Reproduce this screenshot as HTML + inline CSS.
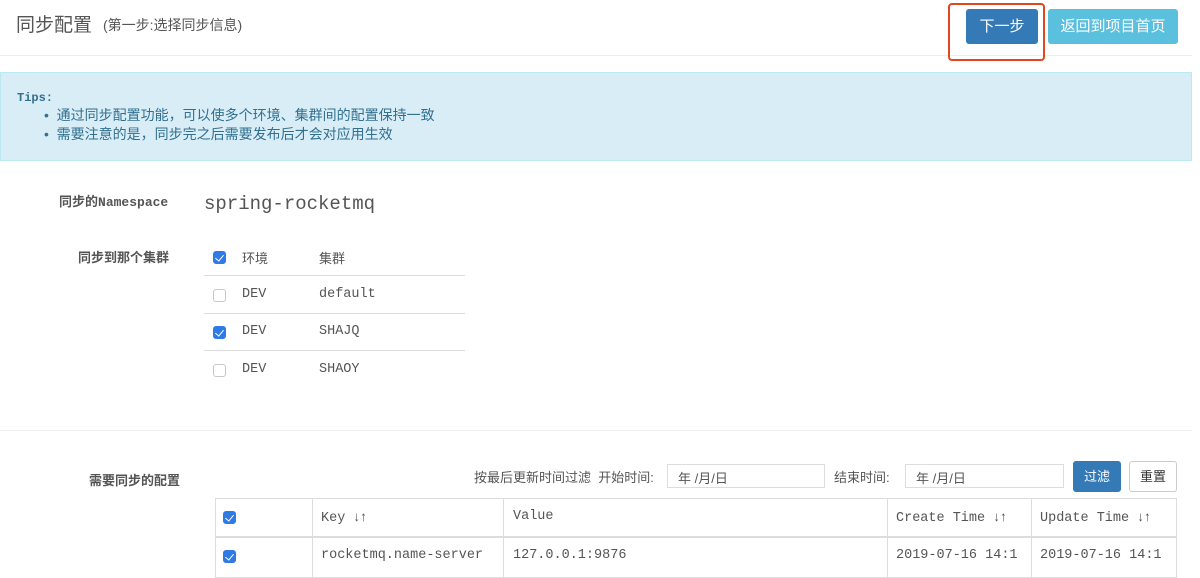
<!DOCTYPE html>
<html><head><meta charset="utf-8"><style>
*{margin:0;padding:0;box-sizing:border-box}
body{width:1200px;height:567px;overflow:hidden;background:#fff;font-family:"Liberation Sans","Noto Sans CJK SC",sans-serif;color:#333;position:relative;font-size:13px}
.a{position:absolute;white-space:nowrap}
.mono{font-family:"Liberation Mono","Noto Sans CJK SC",monospace;font-size:13.5px}
.cb{position:absolute;width:13px;height:13px;border-radius:3px;border:1px solid #c8c8c8;background:#fff}
.cb.on{background:#2f7ae5;border-color:#2f7ae5}
.cb.on:after{content:"";position:absolute;left:3px;top:1px;width:4px;height:7px;border:solid #fff;border-width:0 1.5px 1.5px 0;transform:rotate(40deg)}
.hl{position:absolute;height:1px;background:#ddd}
.vl{position:absolute;width:1px;background:#ddd}
</style></head><body>
<div class="a" style="left:16px;top:10px;font-size:19px;color:#555">同步配置</div>
<div class="a" style="left:103px;top:15px;font-size:14px;color:#555">(第一步:选择同步信息)</div>
<div class="hl" style="left:0;top:55px;width:1192px;background:#eee"></div>
<div style="position:absolute;left:948px;top:3px;width:97px;height:58px;border:2px solid #e4471d;border-radius:4px"></div>
<div class="a" style="left:966px;top:9px;width:72px;height:35px;background:#337ab7;border-radius:3px;color:#fff;font-size:15px;text-align:center;line-height:35px">下一步</div>
<div class="a" style="left:1048px;top:9px;width:130px;height:35px;background:#5bc0de;border-radius:3px;color:#fff;font-size:15px;text-align:center;line-height:35px">返回到项目首页</div>
<div style="position:absolute;left:0;top:72px;width:1192px;height:89px;background:#d9edf7;border:1px solid #bce8f1"></div>
<div class="a mono" style="left:17px;top:91px;font-size:12px;font-weight:bold;color:#31708f">Tips:</div>
<div class="a" style="left:44px;top:106px;font-size:14px;color:#31708f;line-height:19px">•&nbsp;&nbsp;通过同步配置功能，可以使多个环境、集群间的配置保持一致<br>•&nbsp;&nbsp;需要注意的是，同步完之后需要发布后才会对应用生效</div>
<div class="a" style="left:59px;top:191px;font-size:13px;font-weight:bold;color:#555">同步的<span class="mono" style="font-size:13px">Namespace</span></div>
<div class="a mono" style="left:204px;top:193px;font-size:19px;color:#555">spring-rocketmq</div>
<div class="a" style="left:78px;top:247px;font-size:13px;font-weight:bold;color:#555">同步到那个集群</div>
<div class="cb on" style="left:213px;top:251px"></div>
<div class="a" style="left:242px;top:248px;color:#555">环境</div>
<div class="a" style="left:319px;top:248px;color:#555">集群</div>
<div class="hl" style="left:204px;top:275px;width:261px"></div>
<div class="cb" style="left:213px;top:289px"></div>
<div class="a mono" style="left:242px;top:287px;color:#555">DEV</div>
<div class="a mono" style="left:319px;top:287px;color:#555">default</div>
<div class="hl" style="left:204px;top:313px;width:261px"></div>
<div class="cb on" style="left:213px;top:326px"></div>
<div class="a mono" style="left:242px;top:324px;color:#555">DEV</div>
<div class="a mono" style="left:319px;top:324px;color:#555">SHAJQ</div>
<div class="hl" style="left:204px;top:350px;width:261px"></div>
<div class="cb" style="left:213px;top:364px"></div>
<div class="a mono" style="left:242px;top:362px;color:#555">DEV</div>
<div class="a mono" style="left:319px;top:362px;color:#555">SHAOY</div>
<div class="hl" style="left:0;top:430px;width:1192px;background:#eee"></div>
<div class="a" style="left:89px;top:470px;font-size:13px;font-weight:bold;color:#555">需要同步的配置</div>
<div class="a" style="left:474px;top:467px;color:#555">按最后更新时间过滤&nbsp;&nbsp;开始时间:</div>
<div class="a" style="left:667px;top:464px;width:158px;height:24px;border:1px solid #ddd;padding:3px 10px;color:#555">年 /月/日</div>
<div class="a" style="left:834px;top:467px;color:#555">结束时间:</div>
<div class="a" style="left:905px;top:464px;width:159px;height:24px;border:1px solid #ddd;padding:3px 10px;color:#555">年 /月/日</div>
<div class="a" style="left:1073px;top:461px;width:48px;height:31px;background:#337ab7;border-radius:3px;color:#fff;text-align:center;line-height:31px">过滤</div>
<div class="a" style="left:1129px;top:461px;width:48px;height:31px;border:1px solid #ccc;border-radius:3px;color:#333;text-align:center;line-height:29px">重置</div>
<div style="position:absolute;left:215px;top:498px;width:962px;height:80px;border:1px solid #ddd"></div>
<div class="hl" style="left:215px;top:536px;width:962px;height:2px"></div>
<div class="vl" style="left:312px;top:498px;height:80px"></div>
<div class="vl" style="left:503px;top:498px;height:80px"></div>
<div class="vl" style="left:887px;top:498px;height:80px"></div>
<div class="vl" style="left:1031px;top:498px;height:80px"></div>
<div class="cb on" style="left:223px;top:511px"></div>
<div class="a mono" style="left:321px;top:509px;color:#555">Key <b style="font-family:'Liberation Sans'">↓↑</b></div>
<div class="a mono" style="left:513px;top:509px;color:#555">Value</div>
<div class="a mono" style="left:896px;top:509px;color:#555">Create Time <b style="font-family:'Liberation Sans'">↓↑</b></div>
<div class="a mono" style="left:1040px;top:509px;color:#555">Update Time <b style="font-family:'Liberation Sans'">↓↑</b></div>
<div class="cb on" style="left:223px;top:550px"></div>
<div class="a mono" style="left:321px;top:548px;color:#555">rocketmq.name-server</div>
<div class="a mono" style="left:513px;top:548px;color:#555">127.0.0.1:9876</div>
<div class="a mono" style="left:896px;top:548px;color:#555">2019-07-16 14:1</div>
<div class="a mono" style="left:1040px;top:548px;color:#555">2019-07-16 14:1</div>
</body></html>
